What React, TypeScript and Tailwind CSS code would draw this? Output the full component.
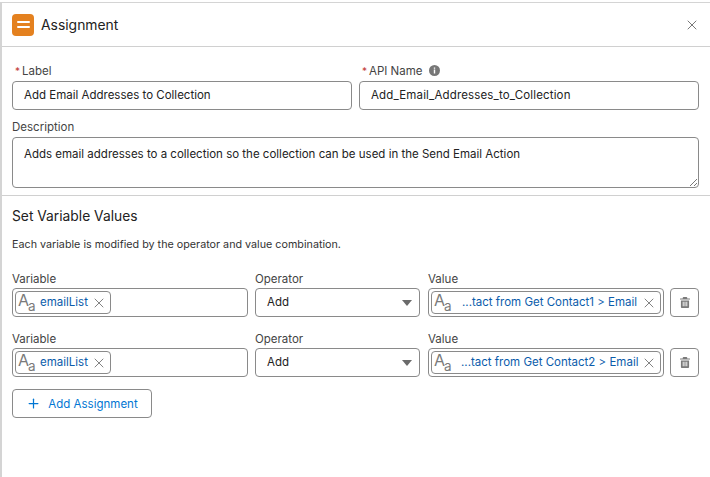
import React from 'react';
import { X, Plus } from 'lucide-react';

const inputCls = 'h-[29px] rounded-[4px] border border-[#8a8a8a] bg-white';

function TypeIcon() {
  return (
    <span className="relative w-[18px] h-[20px] shrink-0 text-[#7a7a7a]">
      <span className="absolute left-0 top-[-2px] text-[16px] leading-[18px]">A</span>
      <span className="absolute left-[10px] top-[5px] text-[13.5px] leading-[16px]">a</span>
    </span>
  );
}

function Pill({ text, full, indent }: { text: string; full?: boolean; indent?: string }) {
  return (
    <div className={`flex items-center h-[23px] rounded-[4px] border border-[#8a8a8a] pl-[2px] pr-[3px] ${full ? 'w-full' : 'w-[96px]'}`}>
      <TypeIcon />
      <span className={`flex-1 pt-[1px] text-[11.5px] text-[#0b5cab] whitespace-nowrap ${indent ?? 'ml-[4px]'}`}>{text}</span>
      <X size={16} strokeWidth={1.1} className="text-[#555] shrink-0" />
    </div>
  );
}

function Row({ value, indent }: { value: string; indent: string }) {
  return (
    <div className="flex items-end">
      <div className="w-[236px]">
        <div className="text-[11.5px] leading-[14px] text-[#444] mb-[2px]">Variable</div>
        <div className={`${inputCls} flex items-center px-[2px]`}>
          <Pill text="emailList" />
        </div>
      </div>
      <div className="w-[165px] ml-[7px]">
        <div className="text-[11.5px] leading-[14px] text-[#444] mb-[2px]">Operator</div>
        <div className={`${inputCls} flex items-center justify-between pl-[11px] pr-[7px]`}>
          <span className="pt-[1px] text-[11.5px] text-[#222]">Add</span>
          <span className="w-0 h-0 border-x-[5px] border-x-transparent border-t-[6px] border-t-[#6b6b6b]" />
        </div>
      </div>
      <div className="w-[236px] ml-[8px]">
        <div className="text-[11.5px] leading-[14px] text-[#444] mb-[2px]">Value</div>
        <div className={`${inputCls} flex items-center px-[2px]`}>
          <Pill text={value} full indent={indent} />
        </div>
      </div>
      <button className={`${inputCls} w-[29px] ml-[6px] flex items-center justify-center`}>
        <svg width="10" height="11" viewBox="0 0 11 12" fill="#7a7a7a">
          <path d="M4 0h3a1 1 0 0 1 1 1v.6h2.6a.4.4 0 0 1 .4.4v.7H0V2a.4.4 0 0 1 .4-.4H3V1a1 1 0 0 1 1-1Z" />
          <path d="M1 3.8h9v7.2a1 1 0 0 1-1 1H2a1 1 0 0 1-1-1V3.8Zm2 1.4v5h1v-5H3Zm2 0v5h1v-5H5Zm2 0v5h1v-5H7Z" fillRule="evenodd" />
        </svg>
      </button>
    </div>
  );
}

export default function App() {
  return (
    <div className="w-[710px] h-[477px] bg-white overflow-hidden font-['Inter','Liberation_Sans',sans-serif] antialiased">
      <div className="mt-[2px] h-[475px] border-t border-l-2 border-[#d4d4d4]">
        <div className="h-[44px] flex items-center justify-between pl-[10px] pr-[10px] border-b border-[#d0d0d0]">
          <div className="flex items-center">
            <div className="w-[22px] h-[22px] rounded-[4px] bg-[#e4811f] flex flex-col items-center justify-center gap-[3px]">
              <span className="w-[13px] h-[2px] rounded-full bg-white" />
              <span className="w-[13px] h-[2px] rounded-full bg-white" />
            </div>
            <span className="ml-[7px] pt-[1px] text-[13.9px] text-[#222]">Assignment</span>
          </div>
          <X size={16} strokeWidth={1.2} className="text-[#555]" />
        </div>

        <div className="pl-[10px] pr-[11px] pt-[17px] pb-[7px] border-b border-[#d0d0d0]">
          <div className="flex gap-[7px]">
            <div className="w-[340px]">
              <div className="text-[11.5px] leading-[14px] text-[#444] mb-[3px] ml-[3px]">
                <span className="text-[10px] text-[#c23934] mr-[2px]">*</span>Label
              </div>
              <div className={`${inputCls} flex items-center px-[11px] text-[11.5px] text-[#222]`}>Add Email Addresses to Collection</div>
            </div>
            <div className="w-[340px]">
              <div className="flex items-center text-[11.5px] leading-[14px] text-[#444] mb-[3px] ml-[3px]">
                <span className="text-[10px] text-[#c23934] mr-[2px]">*</span>API Name
                <svg className="ml-[6px] -mt-[2px]" width="11" height="11" viewBox="0 0 11 11">
                  <circle cx="5.5" cy="5.5" r="5.5" fill="#777" />
                  <path d="M4.8 2.4h1.4v1.3H4.8zM4.8 4.6h1.4v4H4.8z" fill="#fff" />
                </svg>
              </div>
              <div className={`${inputCls} flex items-center px-[11px] text-[11.5px] tracking-[0.15px] text-[#222]`}>Add_Email_Addresses_to_Collection</div>
            </div>
          </div>
          <div className="mt-[10px] text-[11.5px] leading-[14px] text-[#444] mb-[3px]">Description</div>
          <div className="relative h-[51px] rounded-[4px] border border-[#8a8a8a] px-[11px] pt-[8px] text-[11.5px] leading-[16px] text-[#222]">
            Adds email addresses to a collection so the collection can be used in the Send Email Action
            <svg className="absolute right-[1px] bottom-[1px]" width="8" height="8" viewBox="0 0 8 8" stroke="#777" strokeWidth="1">
              <path d="M1 8 8 1M5 8l3-3" />
            </svg>
          </div>
        </div>

        <div className="pl-[10px] pr-[11px]">
          <div className="mt-[11px] text-[13.8px] leading-[18px] text-[#222]">Set Variable Values</div>
          <div className="mt-[13px] text-[10.75px] leading-[14px] text-[#333]">Each variable is modified by the operator and value combination.</div>
          <div className="mt-[20px]">
            <Row value="...tact from Get Contact1 > Email" indent="ml-[10px]" />
          </div>
          <div className="mt-[15px]">
            <Row value="...tact from Get Contact2 > Email" indent="ml-[9px]" />
          </div>
          <button className={`${inputCls} mt-[12px] w-[140px] flex items-center justify-center gap-[7px] text-[11.5px] text-[#0176d3]`}>
            <Plus size={15} strokeWidth={2} />
            <span className="pt-[2px]">Add Assignment</span>
          </button>
        </div>
      </div>
    </div>
  );
}
